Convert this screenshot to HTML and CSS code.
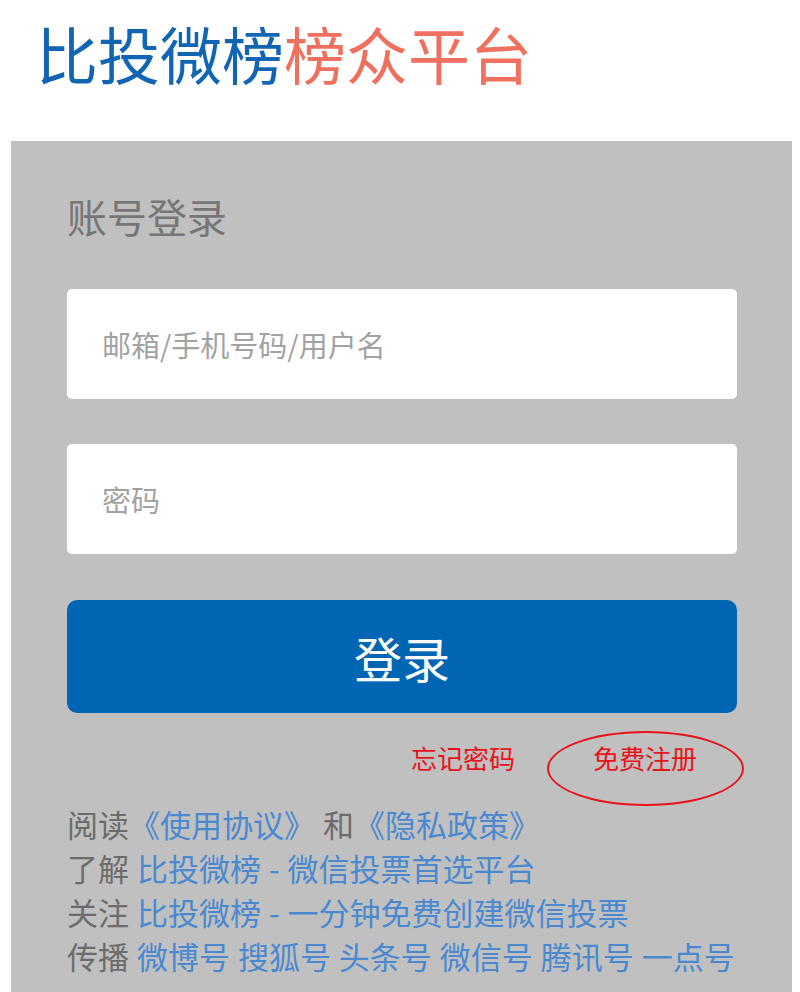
FILE: index.html
```html
<!DOCTYPE html>
<html lang="zh-CN">
<head>
    <meta charset="UTF-8">
    <meta name="viewport" content="width=device-width, initial-scale=1.0">
    <title>账号登录 - 比投微榜</title>
    <link rel="stylesheet" href="styles.css">
</head>
<body>
    <div class="logo">
        <span class="logo-blue">比投微榜</span><span class="logo-red">榜众平台</span>
    </div>

    <div class="panel">
        <h2 class="panel-title">账号登录</h2>
        <form class="login-form" onsubmit="return false;">
            <input class="field" type="text" placeholder="邮箱/手机号码/用户名">
            <input class="field" type="password" placeholder="密码">
            <button class="login-btn" type="submit">登录</button>
        </form>

        <div class="links">
            <a href="#" class="link-red">忘记密码</a>
            <a href="#" class="link-red register">免费注册</a>
        </div>

        <div class="info">
            <p>阅读<a href="#">《使用协议》</a> 和<a href="#">《隐私政策》</a></p>
            <p>了解 <a href="#">比投微榜 - 微信投票首选平台</a></p>
            <p>关注 <a href="#">比投微榜 - 一分钟免费创建微信投票</a></p>
            <p>传播 <a href="#">微博号</a> <a href="#">搜狐号</a> <a href="#">头条号</a> <a href="#">微信号</a> <a href="#">腾讯号</a> <a href="#">一点号</a></p>
        </div>
    </div>
</body>
</html>
```

FILE: styles.css
```css
html, body {
    height: 100%;
}
body {
    margin: 0;
    background-color: #fff;
    font-family: "Noto Sans CJK SC", "Noto Sans", sans-serif;
    display: flex;
    flex-direction: column;
    overflow: hidden;
}
.logo {
    padding: 22px 0 0 36px;
    font-size: 62px;
    line-height: 1;
    margin-bottom: 57px;
    white-space: nowrap;
}
.logo-blue {
    color: #1165b2;
}
.logo-red {
    color: #f0705f;
}
.panel {
    flex: 1;
    width: 781px;
    box-sizing: border-box;
    margin-left: 11px;
    background-color: #c0c0c0;
    padding: 55px 55px 0 56px;
}
.panel-title {
    margin: 0 0 53px;
    font-size: 40px;
    font-weight: normal;
    line-height: 1;
    color: #767676;
}
.login-form {
    display: flex;
    flex-direction: column;
}
.field {
    height: 110px;
    border: none;
    border-radius: 5px;
    background-color: #fff;
    padding: 0 0 0 35px;
    margin-bottom: 45px;
    font-family: inherit;
    font-size: 29px;
    color: #333;
    outline: none;
}
.field::placeholder {
    color: #a2a2a2;
}
.login-btn {
    height: 113px;
    margin-top: 1px;
    border: none;
    border-radius: 10px;
    background-color: #0066b3;
    color: #fff;
    font-family: inherit;
    font-size: 48px;
    cursor: pointer;
}
.links {
    display: flex;
    justify-content: flex-end;
    gap: 78px;
    padding-right: 40px;
    margin-top: 32px;
    font-size: 26px;
    line-height: 1;
}
.link-red {
    color: #e8131b;
    text-decoration: none;
}
.register {
    position: relative;
}
/* red circle drawn round the register link */
.register::after {
    content: "";
    position: absolute;
    left: -46px;
    top: -14px;
    width: 193px;
    height: 71px;
    border: 2px solid #e8131b;
    border-radius: 50%;
}
.info {
    margin-top: 31px;
    font-size: 31px;
    line-height: 44px;
    word-spacing: 1px;
    color: #6c6c6c;
    white-space: nowrap;
}
.info p {
    margin: 0;
}
.info a {
    color: #4a89d0;
    text-decoration: none;
}
```
